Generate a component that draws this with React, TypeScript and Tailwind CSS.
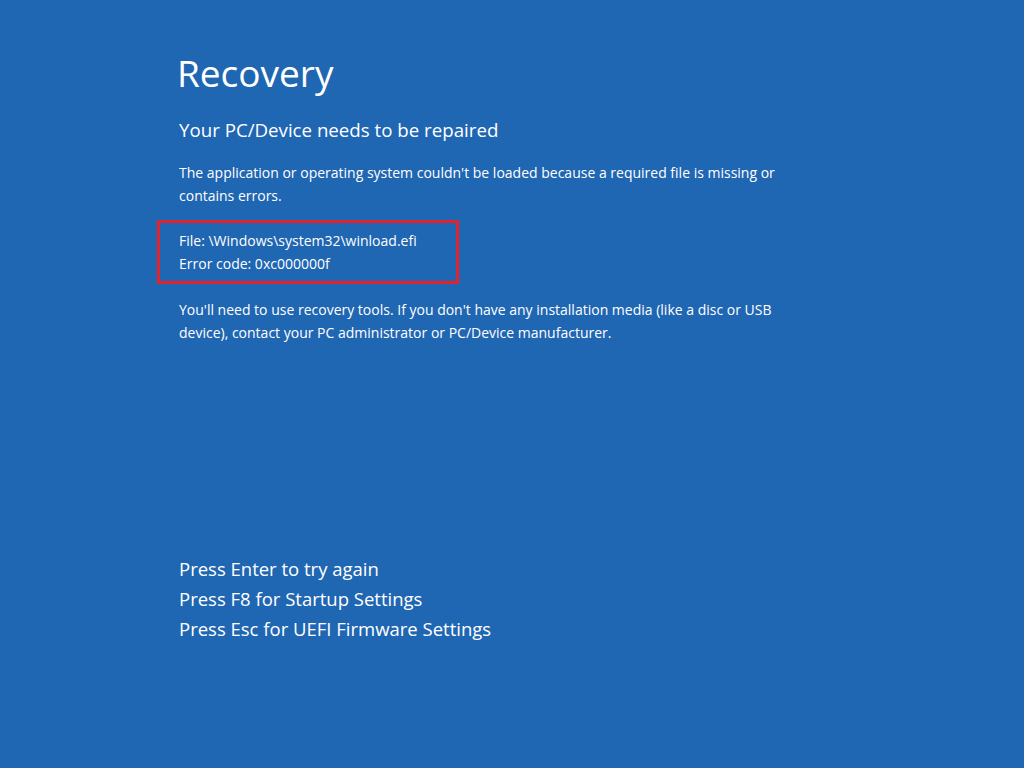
import React from 'react'

const font = { fontFamily: '"Open Sans", "Noto Sans", sans-serif' }

export default function App() {
  return (
    <div
      className="w-[1024px] h-[768px] bg-[#1f66b3] text-white overflow-hidden flex flex-col pl-[179px]"
      style={font}
    >
      {/* heading */}
      <h1 className="mt-[50px] text-[37px] leading-[46px] -ml-[2px] font-normal">Recovery</h1>
      <h2 className="mt-[22px] text-[18.7px] leading-[24px]">Your PC/Device needs to be repaired</h2>

      {/* details */}
      <div className="mt-[19px] text-[14px] leading-[23px] w-[640px]">
        <p>
          The application or operating system couldn't be loaded because a required file is missing or contains errors.
        </p>
        <div className="mt-[13px] -ml-[22px] w-[302px] border-[3px] border-[#e0232e] pl-[19px] pt-[6px] pb-[6px]">
          <p>File: \Windows\system32\winload.efi</p>
          <p>Error code: 0xc000000f</p>
        </div>
        <p className="mt-[14px]">
          You'll need to use recovery tools. If you don't have any installation media (like a disc or USB device), contact your PC administrator or PC/Device manufacturer.
        </p>
      </div>

      {/* key options */}
      <ul className="mt-auto mb-[124px] text-[18.5px] leading-[30px]">
        <li>Press Enter to try again</li>
        <li>Press F8 for Startup Settings</li>
        <li>Press Esc for UEFI Firmware Settings</li>
      </ul>
    </div>
  )
}
